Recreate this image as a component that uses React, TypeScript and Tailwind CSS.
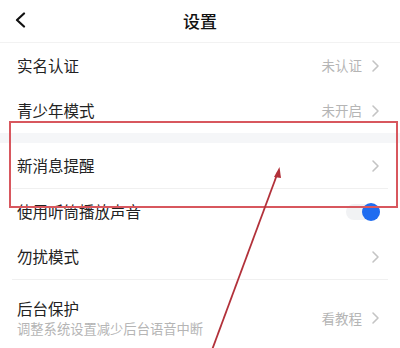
import React from "react";

const Chevron = () => (
  <svg width="9" height="14" viewBox="0 0 9 14" className="ml-[9px]">
    <path d="M2 2 L7 7 L2 12" fill="none" stroke="#c4c4c4" strokeWidth="1.6" strokeLinecap="round" strokeLinejoin="round" />
  </svg>
);

const Row = ({ label, right, chevron = true, h }: { label: string; right?: string; chevron?: boolean; h: string }) => (
  <div className={`flex items-center justify-between pl-[17px] pr-[20px] ${h}`}>
    <span className="text-[15.5px] text-[#222]">{label}</span>
    <div className="flex items-center">
      {right && <span className="text-[13.5px] text-[#b5b5b5]">{right}</span>}
      {chevron && <Chevron />}
    </div>
  </div>
);

export default function App() {
  return (
    <div
      className="relative w-[400px] h-[348px] overflow-hidden bg-white"
      style={{ fontFamily: '"Noto Sans CJK SC", "Noto Sans", sans-serif' }}
    >
      <div className="relative flex h-[43px] items-center justify-center border-b border-[#f2f2f2]">
        <svg width="12" height="16" viewBox="0 0 12 16" className="absolute left-[14px] top-[12px]">
          <path d="M10 1.5 L3 8 L10 14.5" fill="none" stroke="#111" strokeWidth="2.2" strokeLinecap="round" strokeLinejoin="round" />
        </svg>
        <span className="text-[17px] font-medium text-[#111]">设置</span>
      </div>
      <Row label="实名认证" right="未认证" h="h-[45px]" />
      <Row label="青少年模式" right="未开启" h="h-[45px]" />
      <div className="h-[10px] bg-[#f5f6f8]" />
      <Row label="新消息提醒" h="h-[45px]" />
      <div className="mx-[12px] h-px bg-[#f0f0f0]" />
      <div className="flex h-[45px] items-center justify-between pl-[17px] pr-[20px]">
        <span className="text-[15.5px] text-[#222]">使用听筒播放声音</span>
        <div className="relative flex h-[16px] w-[34px] items-center justify-end rounded-full bg-[#f1f2f4]">
          <div className="h-[18px] w-[18px] rounded-full bg-[#1f6cf0]" />
        </div>
      </div>
      <Row label="勿扰模式" h="h-[45px]" />
      <div className="mx-[12px] h-px bg-[#f0f0f0]" />
      <div className="flex items-center justify-between pl-[17px] pr-[20px] pt-[17px]">
        <div className="flex flex-col">
          <span className="text-[15.5px] leading-[22px] text-[#222]">后台保护</span>
          <span className="text-[13.3px] leading-[20px] text-[#b5b5b5]">调整系统设置减少后台语音中断</span>
        </div>
        <div className="flex items-center">
          <span className="text-[13.5px] text-[#b5b5b5]">看教程</span>
          <Chevron />
        </div>
      </div>

      <div className="absolute left-[9px] top-[121px] h-[87px] w-[389px] border-2 border-[#d8575e]" />
      <svg className="absolute left-0 top-0" width="400" height="348" viewBox="0 0 400 348">
        <line x1="212" y1="350" x2="278" y2="172" stroke="#b2313a" strokeWidth="1.8" />
        <path d="M279.5 167 L274 177 L281 178 Z" fill="#b2313a" />
      </svg>
    </div>
  );
}
